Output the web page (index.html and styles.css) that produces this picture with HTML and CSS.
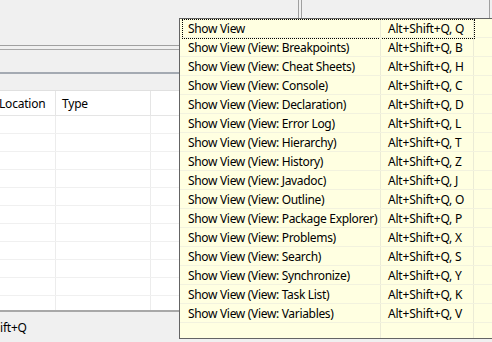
FILE: index.html
```html
<!DOCTYPE html>
<html>
<head>
<meta charset="utf-8">
<link rel="stylesheet" href="styles.css">
</head>
<body>
<div class="screen">
  <div class="toparea">
    <div class="pane pane-left"></div>
    <div class="pane pane-right"></div>
  </div>
  <div class="sep-double"></div>
  <div class="tabband"></div>
  <div class="toolband"></div>
  <div class="table">
    <div class="trow thead">
      <div class="tc c1"><span class="clip">Location</span></div>
      <div class="tc c2">Type</div>
      <div class="tc c3"></div>
    </div>
    <div class="trow"><div class="tc c1"></div><div class="tc c2"></div><div class="tc c3"></div></div>
    <div class="trow"><div class="tc c1"></div><div class="tc c2"></div><div class="tc c3"></div></div>
    <div class="trow"><div class="tc c1"></div><div class="tc c2"></div><div class="tc c3"></div></div>
    <div class="trow"><div class="tc c1"></div><div class="tc c2"></div><div class="tc c3"></div></div>
    <div class="trow"><div class="tc c1"></div><div class="tc c2"></div><div class="tc c3"></div></div>
    <div class="trow"><div class="tc c1"></div><div class="tc c2"></div><div class="tc c3"></div></div>
    <div class="trow"><div class="tc c1"></div><div class="tc c2"></div><div class="tc c3"></div></div>
    <div class="trow"><div class="tc c1"></div><div class="tc c2"></div><div class="tc c3"></div></div>
    <div class="trow"><div class="tc c1"></div><div class="tc c2"></div><div class="tc c3"></div></div>
    <div class="trow"><div class="tc c1"></div><div class="tc c2"></div><div class="tc c3"></div></div>
    <div class="trow last"><div class="tc c1"></div><div class="tc c2"></div><div class="tc c3"></div></div>
  </div>
  <div class="status"><span class="status-text">ift+Q</span></div>

  <div class="popup">
    <div class="prow focused"><div class="pc p1">Show View</div><div class="pc p2">Alt+Shift+Q, Q</div><div class="pc p3"></div></div>
    <div class="prow"><div class="pc p1">Show View (View: Breakpoints)</div><div class="pc p2">Alt+Shift+Q, B</div><div class="pc p3"></div></div>
    <div class="prow"><div class="pc p1">Show View (View: Cheat Sheets)</div><div class="pc p2">Alt+Shift+Q, H</div><div class="pc p3"></div></div>
    <div class="prow"><div class="pc p1">Show View (View: Console)</div><div class="pc p2">Alt+Shift+Q, C</div><div class="pc p3"></div></div>
    <div class="prow"><div class="pc p1">Show View (View: Declaration)</div><div class="pc p2">Alt+Shift+Q, D</div><div class="pc p3"></div></div>
    <div class="prow"><div class="pc p1">Show View (View: Error Log)</div><div class="pc p2">Alt+Shift+Q, L</div><div class="pc p3"></div></div>
    <div class="prow"><div class="pc p1">Show View (View: Hierarchy)</div><div class="pc p2">Alt+Shift+Q, T</div><div class="pc p3"></div></div>
    <div class="prow"><div class="pc p1">Show View (View: History)</div><div class="pc p2">Alt+Shift+Q, Z</div><div class="pc p3"></div></div>
    <div class="prow"><div class="pc p1">Show View (View: Javadoc)</div><div class="pc p2">Alt+Shift+Q, J</div><div class="pc p3"></div></div>
    <div class="prow"><div class="pc p1">Show View (View: Outline)</div><div class="pc p2">Alt+Shift+Q, O</div><div class="pc p3"></div></div>
    <div class="prow"><div class="pc p1">Show View (View: Package Explorer)</div><div class="pc p2">Alt+Shift+Q, P</div><div class="pc p3"></div></div>
    <div class="prow"><div class="pc p1">Show View (View: Problems)</div><div class="pc p2">Alt+Shift+Q, X</div><div class="pc p3"></div></div>
    <div class="prow"><div class="pc p1">Show View (View: Search)</div><div class="pc p2">Alt+Shift+Q, S</div><div class="pc p3"></div></div>
    <div class="prow"><div class="pc p1">Show View (View: Synchronize)</div><div class="pc p2">Alt+Shift+Q, Y</div><div class="pc p3"></div></div>
    <div class="prow"><div class="pc p1">Show View (View: Task List)</div><div class="pc p2">Alt+Shift+Q, K</div><div class="pc p3"></div></div>
    <div class="prow"><div class="pc p1">Show View (View: Variables)</div><div class="pc p2">Alt+Shift+Q, V</div><div class="pc p3"></div></div>
    <div class="prow empty"><div class="pc p1"></div><div class="pc p2"></div><div class="pc p3"></div></div>
  </div>
</div>
```

FILE: styles.css
```css
* { box-sizing: border-box; }
html, body { margin: 0; padding: 0; }
body {
  width: 492px;
  height: 342px;
  overflow: hidden;
  background: #f0f0f0;
  font-family: "Noto Sans", "Open Sans", "DejaVu Sans", sans-serif;
  font-size: 12px;
  letter-spacing: -0.2px;
  color: #000;
}
.screen {
  position: relative;
  width: 492px;
  height: 342px;
  display: flex;
  flex-direction: column;
  overflow: hidden;
}
.toparea {
  height: 45px;
  flex: none;
  display: flex;
  gap: 2px;
}
.pane-left {
  width: 299px;
  border-right: 1px solid #a0a0a0;
}
.pane-right {
  width: 189px;
  border-left: 1px solid #a0a0a0;
  border-right: 1px solid #a0a0a0;
}
.sep-double {
  height: 5px;
  flex: none;
  border-top: 1px solid #a0a0a0;
  border-bottom: 1px solid #a8a8a8;
}
.tabband {
  height: 24px;
  flex: none;
  border-bottom: 2px solid #a4aab2;
}
.toolband {
  height: 17px;
  flex: none;
  border-bottom: 1px solid #e0e0e0;
}
.table {
  background: #fff;
  height: 221px;
  flex: none;
  border-bottom: 2px solid #a8a8a8;
  display: flex;
  flex-direction: column;
}
.trow {
  display: flex;
  height: 18px;
  border-bottom: 1px solid #f0f0f0;
  flex: none;
}
.trow.thead {
  height: 25px;
  border-bottom: 1px solid #e5e5e5;
}
.trow.last { border-bottom: none; flex: 1; }
.tc {
  border-right: 1px solid #ececec;
  display: flex;
  align-items: center;
  overflow: hidden;
  white-space: nowrap;
}
.thead .tc { border-right-color: #e5e5e5; }
.c1 { width: 56px; }
.c1 .clip { margin-left: -1px; }
.c2 { width: 95px; padding-left: 6px; }
.c3 { flex: 1; border-right: none; }
.status {
  flex: 1;
  display: flex;
  align-items: center;
  padding-top: 1px;
}

.popup {
  position: absolute;
  left: 179px;
  top: 18px;
  width: 330px;
  height: 321px;
  background: #ffffe1;
  border: 1px solid #646464;
  display: flex;
  flex-direction: column;
}
.prow {
  position: relative;
  display: flex;
  height: 19px;
  flex: none;
  border-bottom: 1px solid #f2f2de;
}
.prow.empty { flex: 1; border-bottom: none; }
.prow.focused::before {
  content: "";
  position: absolute;
  left: 2px;
  top: 0;
  width: 291px;
  height: 18px;
  border: 1px dotted #000;
}
.pc {
  display: flex;
  align-items: center;
  white-space: nowrap;
  overflow: hidden;
  border-right: 1px solid #ebebd6;
}
.p1 { width: 201px; padding-left: 8px; letter-spacing: -0.32px; }
.p2 { width: 93px; padding-left: 7px; }
.p3 { flex: 1; border-right: none; }
```
